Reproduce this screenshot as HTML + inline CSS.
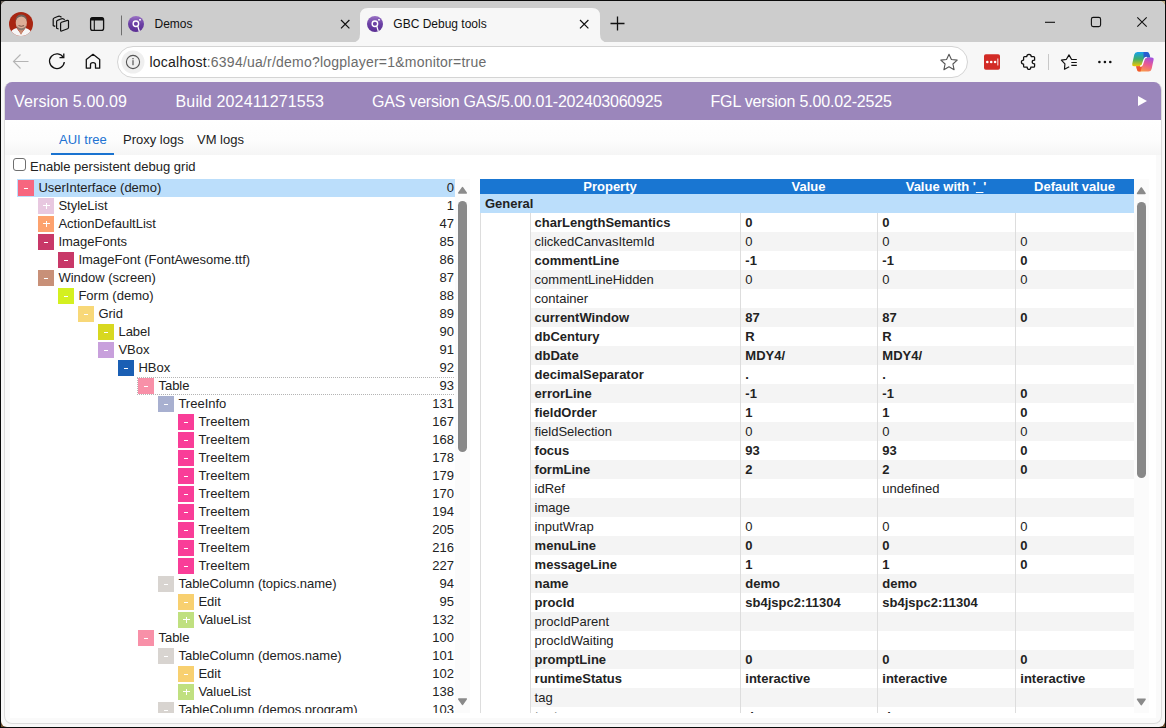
<!DOCTYPE html>
<html><head><meta charset="utf-8"><style>
*{box-sizing:border-box;margin:0;padding:0}
html,body{width:1166px;height:728px;overflow:hidden;background:#0a0a0a;font-family:"Liberation Sans",sans-serif;position:relative}
i{font-style:normal;display:block;position:absolute}
#win{position:absolute;left:1px;top:1px;width:1164px;height:726px;background:#f7f7f7;border-radius:6px;overflow:hidden}
#strip{position:absolute;left:0;top:0;width:1164px;height:41px;background:#cdcdcd}
#content{position:absolute;left:4px;top:82px;width:1158px;height:642px;border:1px solid #dcdcdc;border-top:none;border-radius:8px;overflow:hidden;background:#fafafa}
#content span{position:absolute;white-space:nowrap}
#hdr{position:absolute;left:0;top:0;width:1156px;height:38px;background:#9b86bb;color:#fff;font-size:16px;line-height:18px}
#hdr span{top:10.5px;margin-left:-1px}
#gas{letter-spacing:-0.22px}
#fgl{letter-spacing:-0.17px}
#play{left:1133.3px;top:13.9px;width:0;height:0;border-left:9.4px solid #fff;border-top:5.5px solid transparent;border-bottom:5.5px solid transparent}
#tabs{position:absolute;left:0;top:38px;width:1156px;height:35px;background:linear-gradient(#fff 0%,#fdfdfd 55%,#f5f5f5 100%);font-size:13px;line-height:15px;color:#222}
#tabs .t{top:12px}
#tabs .act{color:#2172d2}
#uline{left:46px;top:33px;width:63px;height:2px;background:#1a73d0}
#chk{position:absolute;left:5px;top:73px;width:1146px;height:563px;background:#fff;font-size:13px;line-height:15px;color:#222}
#chk i{left:3px;top:3px;width:13px;height:13px;border:1.5px solid #6f6f6f;border-radius:3px;background:#fff}
#chk span{left:20px;top:4px}
#tree{position:absolute;left:12px;top:97px;width:439px;height:534px;overflow:hidden;font-size:13px;line-height:15px;color:#222}
.tr{position:absolute;left:0;width:439px;height:18px}
.tr.sel{background:#bbdefb}
.foc{position:absolute;top:0;height:18px;border:1px dotted #b4b4b4}
.ic{top:1px;width:16px;height:16px}
.ic.m::after{content:"";position:absolute;left:6px;top:7.8px;width:4.2px;height:1.15px;background:#fff}
.ic.p::before{content:"";position:absolute;left:4.8px;top:6.9px;width:7px;height:1.15px;background:#fff}
.ic.p::after{content:"";position:absolute;left:7.6px;top:4.6px;width:1.2px;height:6.2px;background:#fff}
.tl{top:1px;margin-left:-0.6px}
.tn{right:2px;top:1px}
#tsb{position:absolute;left:450px;top:97px;width:15px;height:534px;background:#fbfbfb}
.up{left:3px;top:7px;width:0;height:0;border-left:4.5px solid transparent;border-right:4.5px solid transparent;border-bottom:7px solid #888}
.dn{left:3px;bottom:8px;width:0;height:0;border-left:4.5px solid transparent;border-right:4.5px solid transparent;border-top:7px solid #888}
.thumb{left:3px;width:9px;border-radius:5px;background:#888}
#tsb .thumb{top:22px;height:251px}
#ptab{position:absolute;left:475px;top:97px;width:654px;height:534px;overflow:hidden;font-size:13px;line-height:15px;color:#222}
#phead{position:absolute;left:0;top:0;width:654px;height:15px;background:#1976d2;color:#fff;font-weight:bold}
#phead span{top:0;text-align:center}
#phead u{text-decoration:underline}
#pgen{position:absolute;left:0;top:15px;width:654px;height:19px;background:#bbdefb;font-weight:bold;padding-left:5px;line-height:19px}
#prows{position:absolute;left:0;top:34px;width:654px;height:500px}
#prows::before{content:"";position:absolute;left:0;top:0;width:1px;height:500px;background:#ddd;z-index:2}
.pr{position:absolute;left:0;width:654px;height:19px;line-height:19px;background:#fff}
.pr.g span.pc1,.pr.g span.pc2,.pr.g span.pc3,.pr.g span.pc4{background:#f4f4f4}
.pr.b{font-weight:bold}
.pr span{top:0;height:19px}
.pc1{left:50px;width:210px;border-left:1px solid #ddd;padding-left:3.6px}
.pc2{left:260px;width:137px;border-left:1px solid #ddd;padding-left:4.3px}
.pc3{left:397px;width:138px;border-left:1px solid #ddd;padding-left:4.3px}
.pc4{left:535px;width:119px;border-left:1px solid #ddd;padding-left:4.3px}
#psb{position:absolute;left:1129px;top:97px;width:15px;height:534px;background:#fbfbfb}
#psb .thumb{top:23px;height:276px}

</style></head><body>
<i style="left:1px;top:1px;width:7px;height:7px;background:#6a625a"></i><i style="left:1158px;top:1px;width:7px;height:7px;background:#bfb088"></i><i style="left:1px;top:720px;width:7px;height:7px;background:#6a4c2c"></i><i style="left:1158px;top:720px;width:7px;height:7px;background:#6a4c2c"></i>
<div id="win">
 <div id="strip"></div>
</div>
<svg id="chrome" width="1166" height="82" viewBox="0 0 1166 82" style="position:absolute;left:0;top:0">
 <defs>
  <linearGradient id="fav" x1="0" y1="0" x2="0" y2="1"><stop offset="0" stop-color="#9a72c4"/><stop offset="0.5" stop-color="#6a3fa4"/><stop offset="1" stop-color="#5b2f93"/></linearGradient>
  <clipPath id="avc"><circle cx="21" cy="24" r="12"/></clipPath>
  <linearGradient id="cp1" x1="0" y1="0" x2="0" y2="1"><stop offset="0" stop-color="#14a0f0"/><stop offset="0.5" stop-color="#3fae6a"/><stop offset="1" stop-color="#f2c600"/></linearGradient>
  <linearGradient id="cp2" x1="0.8" y1="0" x2="0.4" y2="1"><stop offset="0" stop-color="#a050e0"/><stop offset="0.5" stop-color="#ec5a90"/><stop offset="1" stop-color="#fa9a48"/></linearGradient>
 </defs>
 <!-- avatar -->
 <g clip-path="url(#avc)">
  <rect x="9" y="12" width="24" height="24" fill="#a82612"/>
  <path d="M9 36 Q11 29 16.5 28 L21 34 L25.5 28 Q31 29 33 36Z" fill="#f6f6f6"/>
  <path d="M17.5 28 L21 35 L24.5 28Z" fill="#c98a70"/>
  <ellipse cx="21.3" cy="22.8" rx="5.6" ry="7.4" fill="#dcae98"/>
  <path d="M15.7 21.5 Q15.2 14.8 21.3 14.4 Q27.4 14.8 26.9 21.5 Q26 17 21.3 16.6 Q16.6 17 15.7 21.5Z" fill="#6e625c"/>
  <path d="M16.2 25 Q17 30.5 21.3 30.3 Q25.6 30.5 26.4 25 Q25 28 21.3 28.2 Q17.6 28 16.2 25Z" fill="#8c7a70"/>
  <path d="M18.5 25.6 Q21.3 27 24.1 25.6" fill="none" stroke="#6a4a40" stroke-width="0.9"/>
 </g>
 <!-- workspaces icon -->
 <g fill="none" stroke="#111" stroke-width="1.2" stroke-linejoin="round">
  <path d="M55.3 26.4 L53.2 25.6 L53.2 19.2 Q53.2 18.3 54.1 18 L58.3 16.3 Q59.4 16 60.3 16.5 L61.5 17.3"/>
  <path d="M58.6 29 L56.6 28.3 L56.6 21.6 Q56.6 20.7 57.5 20.4 L61.5 18.8 Q62.6 18.5 63.5 19 L64.7 19.8"/>
  <path d="M60.6 23.5 Q60.6 22.6 61.5 22.3 L67.4 20.4 Q68.5 20.2 68.5 21.2 L68.5 27.6 Q68.5 28.5 67.6 28.8 L61.6 31 Q60.6 31.3 60.6 30.3 Z"/>
 </g>
 <!-- tab actions -->
 <rect x="90.6" y="17.6" width="13" height="12.8" rx="2.2" fill="none" stroke="#111" stroke-width="1.3"/>
 <rect x="90.6" y="17.6" width="13" height="3" rx="1.2" fill="#111"/>
 <line x1="94.3" y1="20" x2="94.3" y2="30.4" stroke="#111" stroke-width="1.1"/>
 <line x1="121.5" y1="15.5" x2="121.5" y2="35.3" stroke="#6e6e6e" stroke-width="1"/>
 <!-- demos tab -->
 <circle cx="136" cy="24" r="8" fill="url(#fav)"/>
 <circle cx="135.9" cy="23.8" r="2.75" fill="none" stroke="#fff" stroke-width="1.4"/>
 <path d="M137.7 26 L139.4 31.5" fill="none" stroke="#fff" stroke-width="1.2"/>
 <rect x="139.2" y="19" width="1.6" height="1.6" fill="#fff"/>
 <text x="154.5" y="28" font-family="Liberation Sans" font-size="12" fill="#111">Demos</text>
 <path d="M341 20 L349.4 28.4 M349.4 20 L341 28.4" stroke="#111" stroke-width="1.2"/>
 <!-- active tab -->
 <path d="M352 42.5 Q360 42.5 360 34 L360 16 Q360 8 368 8 L592 8 Q600 8 600 16 L600 34 Q600 42.5 608 42.5 Z" fill="#f7f7f7"/>
 <circle cx="375" cy="24" r="8" fill="url(#fav)"/>
 <circle cx="374.9" cy="23.8" r="2.75" fill="none" stroke="#fff" stroke-width="1.4"/>
 <path d="M376.7 26 L378.4 31.5" fill="none" stroke="#fff" stroke-width="1.2"/>
 <rect x="378.2" y="19" width="1.6" height="1.6" fill="#fff"/>
 <text x="393.3" y="28" font-family="Liberation Sans" font-size="12" fill="#111">GBC Debug tools</text>
 <path d="M580 20 L588.4 28.4 M588.4 20 L580 28.4" stroke="#111" stroke-width="1.2"/>
 <!-- new tab -->
 <path d="M617.5 16.5 V30.5 M610.5 23.5 H624.5" stroke="#111" stroke-width="1.3"/>
 <!-- window controls -->
 <line x1="1045" y1="22.3" x2="1055" y2="22.3" stroke="#111" stroke-width="1.1"/>
 <rect x="1091.4" y="17.4" width="9.2" height="9.2" rx="1.8" fill="none" stroke="#111" stroke-width="1.1"/>
 <path d="M1137.3 17.3 L1146.7 26.7 M1146.7 17.3 L1137.3 26.7" stroke="#111" stroke-width="1.1"/>
 <!-- toolbar -->
 <path d="M13.5 61.5 H28.5 M20.5 54.5 L13.5 61.5 L20.5 68.5" fill="none" stroke="#b4b4b4" stroke-width="1.1"/>
 <path d="M63.4 57.6 A7.4 7.4 0 1 0 64.3 62" fill="none" stroke="#111" stroke-width="1.3"/>
 <path d="M59.5 57.7 H63.8 V53.6" fill="none" stroke="#111" stroke-width="1.3"/>
 <path d="M86.3 68.2 V59.4 L93 54.3 L99.7 59.4 V68.2 H95.5 V64.5 Q95.5 62.6 93 62.6 Q90.5 62.6 90.5 64.5 V68.2 Z" fill="none" stroke="#111" stroke-width="1.3" stroke-linejoin="round"/>
 <rect x="117.5" y="46.5" width="850" height="31" rx="15.5" fill="#fff" stroke="#d4d4d4" stroke-width="1"/>
 <circle cx="133" cy="62" r="11.5" fill="#efefef"/>
 <circle cx="133" cy="62" r="6.6" fill="none" stroke="#555" stroke-width="1.1"/>
 <rect x="132.4" y="60.2" width="1.2" height="5" fill="#555"/>
 <rect x="132.4" y="58" width="1.2" height="1.3" fill="#555"/>
 <text x="149.5" y="66.8" font-family="Liberation Sans" font-size="14" letter-spacing="0.22" fill="#1a1a1a">localhost<tspan fill="#6b6b6b">:6394/ua/r/demo?logplayer=1&amp;monitor=true</tspan></text>
 <path d="M949 54.2 L951.4 59.5 L957.2 60.1 L952.9 64 L954.1 69.7 L949 66.8 L943.9 69.7 L945.1 64 L940.8 60.1 L946.6 59.5 Z" fill="none" stroke="#555" stroke-width="1.1" stroke-linejoin="round"/>
 <rect x="984" y="54.2" width="16" height="15.6" rx="1.8" fill="#d22b26"/>
 <circle cx="987.3" cy="62" r="1.3" fill="#fff"/>
 <circle cx="991.2" cy="62" r="1.3" fill="#fff"/>
 <circle cx="995.1" cy="62" r="1.3" fill="#fff"/>
 <rect x="997.4" y="58.5" width="0.9" height="7" fill="#fff"/>
 <path d="M1024.6 56.5 H1026.8 Q1026.8 54.3 1029 54.3 Q1031.2 54.3 1031.2 56.5 H1033.6 Q1034.6 56.5 1034.6 57.5 V60.2 Q1032.2 60.2 1032.2 62 Q1032.2 63.8 1034.6 63.8 V66.2 Q1034.6 67.2 1033.6 67.2 H1030.8 Q1030.8 69.4 1029 69.4 Q1027.2 69.4 1027.2 67.2 H1024.6 Q1023.6 67.2 1023.6 66.2 V64 Q1021.4 64 1021.4 62 Q1021.4 60 1023.6 60 V57.5 Q1023.6 56.5 1024.6 56.5 Z" fill="none" stroke="#111" stroke-width="1.25" stroke-linejoin="round"/>
 <line x1="1048.5" y1="54" x2="1048.5" y2="70" stroke="#c8c8c8" stroke-width="1"/>
 <path d="M1069.2 66.8 L1064.5 69.2 L1064.9 63.8 L1061.4 60.2 L1066.4 59.3 L1069 54.9 L1071.6 59.5 H1076.8 M1071.3 62.5 H1076.8 M1071.3 65.4 H1076.8" fill="none" stroke="#111" stroke-width="1.2" stroke-linejoin="round"/>
 <circle cx="1099.4" cy="62" r="1.3" fill="#111"/>
 <circle cx="1104.9" cy="62" r="1.3" fill="#111"/>
 <circle cx="1110.3" cy="62" r="1.3" fill="#111"/>
 <!-- copilot -->
 <path d="M1137.5 52 H1147 Q1148.6 52 1149.2 53.8 L1150.3 57.4 H1146 Q1144.6 57.4 1144.2 58.8 L1142.3 65 Q1141.8 66.2 1140.5 66.2 H1134 Q1131.8 66.2 1132.2 64 L1134.3 54.5 Q1134.9 52 1137.5 52 Z" fill="url(#cp1)"/>
 <path d="M1143.5 52 H1147 Q1148.6 52 1149.2 53.8 L1150.3 57.4 H1146 Q1144.6 57.4 1144.2 58.8 L1143.6 60.5 Z" fill="#2a4fd0" opacity="0.85"/>
 <path d="M1146.5 57.4 H1151.5 Q1154 57.4 1153.6 59.8 L1151.6 69 Q1151 71.6 1148.4 71.6 H1139.2 Q1137.6 71.6 1137.1 70 L1136.1 66.2 H1140.4 Q1141.8 66.2 1142.2 64.8 L1144.2 58.8 Q1144.7 57.4 1146.5 57.4 Z" fill="url(#cp2)"/>
 <path d="M1136.1 66.2 H1140.4 Q1141.8 66.2 1142.2 64.8 L1142.8 63 L1140.6 71.6 H1139.2 Q1137.6 71.6 1137.1 70 Z" fill="#f0502a" opacity="0.9"/>
 <path d="M1146.8 57.4 Q1144.8 57.4 1144.3 58.9 L1142.3 64.8 Q1141.8 66.2 1140 66.2" fill="none" stroke="#fff" stroke-width="1.3"/>
</svg>

<div id="content">
 <div id="hdr"><span style="left:10px;letter-spacing:0.13px">Version 5.00.09</span><span style="left:171.5px;letter-spacing:0.16px">Build 202411271553</span><span id="gas" style="left:368px">GAS version GAS/5.00.01-202403060925</span><span id="fgl" style="left:706.5px">FGL version 5.00.02-2525</span><i id="play"></i></div>
 <div id="tabs"><span class="t act" style="left:54px">AUI tree</span><span class="t" style="left:118px">Proxy logs</span><span class="t" style="left:192px">VM logs</span><i id="uline"></i></div>
 <div id="chk"><i></i><span>Enable persistent debug grid</span></div>
 <div id="tree"><div class="tr sel" style="top:0px"><i class="ic m" style="left:1px;background:#f7667f"></i><span class="tl" style="left:22px">UserInterface (demo)</span><span class="tn">0</span></div>
<div class="tr" style="top:18px"><i class="ic p" style="left:21px;background:#e8c8e0"></i><span class="tl" style="left:42px">StyleList</span><span class="tn">1</span></div>
<div class="tr" style="top:36px"><i class="ic p" style="left:21px;background:#fda26e"></i><span class="tl" style="left:42px">ActionDefaultList</span><span class="tn">47</span></div>
<div class="tr" style="top:54px"><i class="ic m" style="left:21px;background:#c83868"></i><span class="tl" style="left:42px">ImageFonts</span><span class="tn">85</span></div>
<div class="tr" style="top:72px"><i class="ic m" style="left:41px;background:#c83868"></i><span class="tl" style="left:62px">ImageFont (FontAwesome.ttf)</span><span class="tn">86</span></div>
<div class="tr" style="top:90px"><i class="ic m" style="left:21px;background:#c89078"></i><span class="tl" style="left:42px">Window (screen)</span><span class="tn">87</span></div>
<div class="tr" style="top:108px"><i class="ic m" style="left:41px;background:#d4f020"></i><span class="tl" style="left:62px">Form (demo)</span><span class="tn">88</span></div>
<div class="tr" style="top:126px"><i class="ic m" style="left:61px;background:#f8d878"></i><span class="tl" style="left:82px">Grid</span><span class="tn">89</span></div>
<div class="tr" style="top:144px"><i class="ic m" style="left:81px;background:#d8d820"></i><span class="tl" style="left:102px">Label</span><span class="tn">90</span></div>
<div class="tr" style="top:162px"><i class="ic m" style="left:81px;background:#c8a0dc"></i><span class="tl" style="left:102px">VBox</span><span class="tn">91</span></div>
<div class="tr" style="top:180px"><i class="ic m" style="left:101px;background:#1a5fb4"></i><span class="tl" style="left:122px">HBox</span><span class="tn">92</span></div>
<div class="tr" style="top:198px"><i class="foc" style="left:120px;width:319px"></i><i class="ic m" style="left:121px;background:#f890a8"></i><span class="tl" style="left:142px">Table</span><span class="tn">93</span></div>
<div class="tr" style="top:216px"><i class="ic m" style="left:141px;background:#a8b0d0"></i><span class="tl" style="left:162px">TreeInfo</span><span class="tn">131</span></div>
<div class="tr" style="top:234px"><i class="ic m" style="left:161px;background:#f93d98"></i><span class="tl" style="left:182px">TreeItem</span><span class="tn">167</span></div>
<div class="tr" style="top:252px"><i class="ic m" style="left:161px;background:#f93d98"></i><span class="tl" style="left:182px">TreeItem</span><span class="tn">168</span></div>
<div class="tr" style="top:270px"><i class="ic m" style="left:161px;background:#f93d98"></i><span class="tl" style="left:182px">TreeItem</span><span class="tn">178</span></div>
<div class="tr" style="top:288px"><i class="ic m" style="left:161px;background:#f93d98"></i><span class="tl" style="left:182px">TreeItem</span><span class="tn">179</span></div>
<div class="tr" style="top:306px"><i class="ic m" style="left:161px;background:#f93d98"></i><span class="tl" style="left:182px">TreeItem</span><span class="tn">170</span></div>
<div class="tr" style="top:324px"><i class="ic m" style="left:161px;background:#f93d98"></i><span class="tl" style="left:182px">TreeItem</span><span class="tn">194</span></div>
<div class="tr" style="top:342px"><i class="ic m" style="left:161px;background:#f93d98"></i><span class="tl" style="left:182px">TreeItem</span><span class="tn">205</span></div>
<div class="tr" style="top:360px"><i class="ic m" style="left:161px;background:#f93d98"></i><span class="tl" style="left:182px">TreeItem</span><span class="tn">216</span></div>
<div class="tr" style="top:378px"><i class="ic m" style="left:161px;background:#f93d98"></i><span class="tl" style="left:182px">TreeItem</span><span class="tn">227</span></div>
<div class="tr" style="top:396px"><i class="ic m" style="left:141px;background:#d8d4d0"></i><span class="tl" style="left:162px">TableColumn (topics.name)</span><span class="tn">94</span></div>
<div class="tr" style="top:414px"><i class="ic m" style="left:161px;background:#f8d070"></i><span class="tl" style="left:182px">Edit</span><span class="tn">95</span></div>
<div class="tr" style="top:432px"><i class="ic p" style="left:161px;background:#c0e080"></i><span class="tl" style="left:182px">ValueList</span><span class="tn">132</span></div>
<div class="tr" style="top:450px"><i class="ic m" style="left:121px;background:#f890a8"></i><span class="tl" style="left:142px">Table</span><span class="tn">100</span></div>
<div class="tr" style="top:468px"><i class="ic m" style="left:141px;background:#d8d4d0"></i><span class="tl" style="left:162px">TableColumn (demos.name)</span><span class="tn">101</span></div>
<div class="tr" style="top:486px"><i class="ic m" style="left:161px;background:#f8d070"></i><span class="tl" style="left:182px">Edit</span><span class="tn">102</span></div>
<div class="tr" style="top:504px"><i class="ic p" style="left:161px;background:#c0e080"></i><span class="tl" style="left:182px">ValueList</span><span class="tn">138</span></div>
<div class="tr" style="top:522px"><i class="ic m" style="left:141px;background:#d8d4d0"></i><span class="tl" style="left:162px">TableColumn (demos.program)</span><span class="tn">103</span></div></div>
 <div id="tsb"><svg width="15" height="534" style="position:absolute;left:0;top:0"><path d="M7.5 8.6 L11.2 14 H3.8 Z" fill="#8a8a8a" stroke="#8a8a8a" stroke-width="1.6" stroke-linejoin="round"/><path d="M7.5 525.4 L11.2 520 H3.8 Z" fill="#8a8a8a" stroke="#8a8a8a" stroke-width="1.6" stroke-linejoin="round"/></svg><i class="thumb"></i></div>
 <div id="ptab">
  <div id="phead"><span style="left:0;width:260px">Property</span><span style="left:260px;width:137px">Value</span><span style="left:397px;width:138px">Value with '<u>_</u>'</span><span style="left:535px;width:119px">Default value</span></div>
  <div id="pgen">General</div>
  <div id="prows"><div class="pr b" style="top:0px"><span class="pc0"></span><span class="pc1">charLengthSemantics</span><span class="pc2">0</span><span class="pc3">0</span><span class="pc4"></span></div>
<div class="pr g" style="top:19px"><span class="pc0"></span><span class="pc1">clickedCanvasItemId</span><span class="pc2">0</span><span class="pc3">0</span><span class="pc4">0</span></div>
<div class="pr b" style="top:38px"><span class="pc0"></span><span class="pc1">commentLine</span><span class="pc2">-1</span><span class="pc3">-1</span><span class="pc4">0</span></div>
<div class="pr g" style="top:57px"><span class="pc0"></span><span class="pc1">commentLineHidden</span><span class="pc2">0</span><span class="pc3">0</span><span class="pc4">0</span></div>
<div class="pr" style="top:76px"><span class="pc0"></span><span class="pc1">container</span><span class="pc2"></span><span class="pc3"></span><span class="pc4"></span></div>
<div class="pr g b" style="top:95px"><span class="pc0"></span><span class="pc1">currentWindow</span><span class="pc2">87</span><span class="pc3">87</span><span class="pc4">0</span></div>
<div class="pr b" style="top:114px"><span class="pc0"></span><span class="pc1">dbCentury</span><span class="pc2">R</span><span class="pc3">R</span><span class="pc4"></span></div>
<div class="pr g b" style="top:133px"><span class="pc0"></span><span class="pc1">dbDate</span><span class="pc2">MDY4/</span><span class="pc3">MDY4/</span><span class="pc4"></span></div>
<div class="pr b" style="top:152px"><span class="pc0"></span><span class="pc1">decimalSeparator</span><span class="pc2">.</span><span class="pc3">.</span><span class="pc4"></span></div>
<div class="pr g b" style="top:171px"><span class="pc0"></span><span class="pc1">errorLine</span><span class="pc2">-1</span><span class="pc3">-1</span><span class="pc4">0</span></div>
<div class="pr b" style="top:190px"><span class="pc0"></span><span class="pc1">fieldOrder</span><span class="pc2">1</span><span class="pc3">1</span><span class="pc4">0</span></div>
<div class="pr g" style="top:209px"><span class="pc0"></span><span class="pc1">fieldSelection</span><span class="pc2">0</span><span class="pc3">0</span><span class="pc4">0</span></div>
<div class="pr b" style="top:228px"><span class="pc0"></span><span class="pc1">focus</span><span class="pc2">93</span><span class="pc3">93</span><span class="pc4">0</span></div>
<div class="pr g b" style="top:247px"><span class="pc0"></span><span class="pc1">formLine</span><span class="pc2">2</span><span class="pc3">2</span><span class="pc4">0</span></div>
<div class="pr" style="top:266px"><span class="pc0"></span><span class="pc1">idRef</span><span class="pc2"></span><span class="pc3">undefined</span><span class="pc4"></span></div>
<div class="pr g" style="top:285px"><span class="pc0"></span><span class="pc1">image</span><span class="pc2"></span><span class="pc3"></span><span class="pc4"></span></div>
<div class="pr" style="top:304px"><span class="pc0"></span><span class="pc1">inputWrap</span><span class="pc2">0</span><span class="pc3">0</span><span class="pc4">0</span></div>
<div class="pr g b" style="top:323px"><span class="pc0"></span><span class="pc1">menuLine</span><span class="pc2">0</span><span class="pc3">0</span><span class="pc4">0</span></div>
<div class="pr b" style="top:342px"><span class="pc0"></span><span class="pc1">messageLine</span><span class="pc2">1</span><span class="pc3">1</span><span class="pc4">0</span></div>
<div class="pr g b" style="top:361px"><span class="pc0"></span><span class="pc1">name</span><span class="pc2">demo</span><span class="pc3">demo</span><span class="pc4"></span></div>
<div class="pr b" style="top:380px"><span class="pc0"></span><span class="pc1">procId</span><span class="pc2">sb4jspc2:11304</span><span class="pc3">sb4jspc2:11304</span><span class="pc4"></span></div>
<div class="pr g" style="top:399px"><span class="pc0"></span><span class="pc1">procIdParent</span><span class="pc2"></span><span class="pc3"></span><span class="pc4"></span></div>
<div class="pr" style="top:418px"><span class="pc0"></span><span class="pc1">procIdWaiting</span><span class="pc2"></span><span class="pc3"></span><span class="pc4"></span></div>
<div class="pr g b" style="top:437px"><span class="pc0"></span><span class="pc1">promptLine</span><span class="pc2">0</span><span class="pc3">0</span><span class="pc4">0</span></div>
<div class="pr b" style="top:456px"><span class="pc0"></span><span class="pc1">runtimeStatus</span><span class="pc2">interactive</span><span class="pc3">interactive</span><span class="pc4">interactive</span></div>
<div class="pr g" style="top:475px"><span class="pc0"></span><span class="pc1">tag</span><span class="pc2"></span><span class="pc3"></span><span class="pc4"></span></div>
<div class="pr b" style="top:494px"><span class="pc0"></span><span class="pc1">text</span><span class="pc2">ri</span><span class="pc3">ri</span><span class="pc4"></span></div></div>
 </div>
 <div id="psb"><svg width="15" height="534" style="position:absolute;left:0;top:0"><path d="M7.3 9 L11 14.4 H3.6 Z" fill="#8a8a8a" stroke="#8a8a8a" stroke-width="1.6" stroke-linejoin="round"/><path d="M7.3 525.6 L11 520.2 H3.6 Z" fill="#8a8a8a" stroke="#8a8a8a" stroke-width="1.6" stroke-linejoin="round"/></svg><i class="thumb"></i></div>
</div>
</body></html>
